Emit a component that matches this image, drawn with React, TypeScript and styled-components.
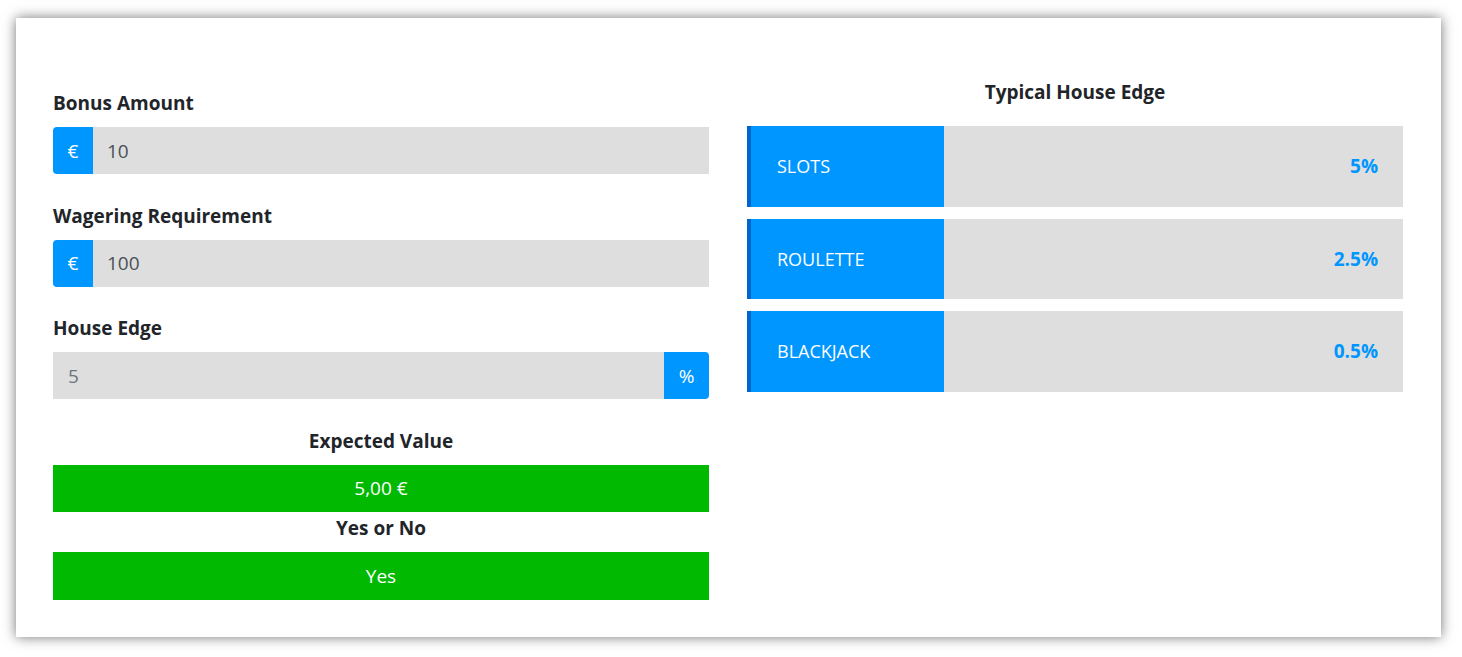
import styled, { createGlobalStyle } from "styled-components";

const GlobalStyle = createGlobalStyle`
  html, body {
    margin: 0;
    padding: 0;
    background: #ffffff;
  }
  body {
    font-family: "Open Sans", "Noto Sans", sans-serif;
    color: #212529;
  }
`;

const Page = styled.div`
  padding: 18px 21px 20px 16px;
`;

const Card = styled.div`
  background: #fff;
  box-shadow: 0 0 12px rgba(0, 0, 0, 0.55);
  padding: 62px 38px 37px 37px;
  display: grid;
  grid-template-columns: 656px 656px;
  column-gap: 38px;
  align-items: start;
`;

const Column = styled.div`
  display: flex;
  flex-direction: column;
`;

const Label = styled.div<{ $center?: boolean; $top?: number }>`
  font-size: 19px;
  font-weight: 700;
  line-height: 24px;
  margin-top: ${(p) => p.$top ?? 29.5}px;
  margin-bottom: 12px;
  text-align: ${(p) => (p.$center ? "center" : "left")};
`;

const InputGroup = styled.div`
  display: flex;
  height: 47px;
`;

const Addon = styled.div<{ $side: "left" | "right"; $w: number }>`
  width: ${(p) => p.$w}px;
  flex: none;
  background: #0096ff;
  color: #fff;
  display: flex;
  align-items: center;
  justify-content: center;
  font-size: 19px;
  border-radius: ${(p) => (p.$side === "left" ? "4px 0 0 4px" : "0 4px 4px 0")};
`;

const Field = styled.div<{ $muted?: boolean }>`
  flex: 1;
  background: #dedede;
  display: flex;
  align-items: center;
  padding-left: ${(p) => (p.$muted ? 15 : 14)}px;
  font-size: 19px;
  color: ${(p) => (p.$muted ? "#6c757d" : "#495057")};
`;

const Result = styled.div`
  height: 47.5px;
  background: #00b900;
  color: #fff;
  display: flex;
  align-items: center;
  justify-content: center;
  font-size: 19px;
`;

const Title = styled.div`
  font-size: 19px;
  font-weight: 700;
  line-height: 24px;
  text-align: center;
  margin-top: 0;
  margin-bottom: 22px;
`;

const EdgeList = styled.div`
  display: flex;
  flex-direction: column;
  gap: 12px;
`;

const EdgeRow = styled.div`
  display: flex;
  height: 80.5px;
  background: #dedede;
`;

const EdgeName = styled.div`
  width: 197px;
  flex: none;
  box-sizing: border-box;
  background: #0096ff;
  border-left: 4px solid #0064c8;
  color: #fff;
  display: flex;
  align-items: center;
  padding-left: 26px;
  font-size: 18px;
`;

const EdgeValue = styled.div`
  flex: 1;
  display: flex;
  align-items: center;
  justify-content: flex-end;
  padding-right: 25px;
  color: #0096ff;
  font-weight: 700;
  font-size: 19px;
`;

const edges = [
  { name: "SLOTS", value: "5%" },
  { name: "ROULETTE", value: "2.5%" },
  { name: "BLACKJACK", value: "0.5%" },
];

export default function App() {
  return (
    <>
      <GlobalStyle />
      <Page>
        <Card>
          <Column>
            <Label $top={11}>Bonus Amount</Label>
            <InputGroup>
              <Addon $side="left" $w={40}>€</Addon>
              <Field>10</Field>
            </InputGroup>
            <Label>Wagering Requirement</Label>
            <InputGroup>
              <Addon $side="left" $w={40}>€</Addon>
              <Field>100</Field>
            </InputGroup>
            <Label>House Edge</Label>
            <InputGroup>
              <Field $muted>5</Field>
              <Addon $side="right" $w={45}>%</Addon>
            </InputGroup>
            <Label $center>Expected Value</Label>
            <Result>5,00 €</Result>
            <Label $center $top={4}>Yes or No</Label>
            <Result>Yes</Result>
          </Column>
          <Column>
            <Title>Typical House Edge</Title>
            <EdgeList>
              {edges.map((e) => (
                <EdgeRow key={e.name}>
                  <EdgeName>{e.name}</EdgeName>
                  <EdgeValue>{e.value}</EdgeValue>
                </EdgeRow>
              ))}
            </EdgeList>
          </Column>
        </Card>
      </Page>
    </>
  );
}
